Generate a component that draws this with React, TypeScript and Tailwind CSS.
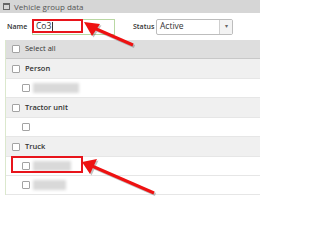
import React from "react";

type Row = {
  label?: string;
  parent: boolean;
  blur?: number;
};

const rows: Row[] = [
  { label: "Person", parent: true },
  { parent: false, blur: 46 },
  { label: "Tractor unit", parent: true },
  { parent: false },
  { label: "Truck", parent: true },
  { parent: false, blur: 38 },
  { parent: false, blur: 33 },
];

function Box() {
  return <span className="block w-[8px] h-[8px] shrink-0 border border-[#a3a3a3] bg-white rounded-[1px]" />;
}

export default function App() {
  return (
    <div
      className="relative w-[260px] h-[211px] overflow-hidden bg-white text-[#333]"
      style={{ fontFamily: "'Open Sans', 'Liberation Sans', sans-serif" }}
    >
      {/* title bar */}
      <div className="h-[13px] bg-[#d6d6d6] flex items-center pl-[3px] gap-[4px]">
        <span className="block w-[7px] h-[7px] border border-[#666] border-t-2" />
        <span className="text-[8px] leading-none text-[#555]">Vehicle group data</span>
      </div>

      {/* filter row */}
      <div className="h-[27px] flex items-center">
        <span className="ml-[7px] w-[25px] text-[7px] font-semibold leading-none">Name</span>
        <div className="w-[83px] h-[16px] border border-[#b9d8a3] bg-white flex items-center pl-[3px]">
          <span className="text-[8.5px] leading-none">Co3</span>
          <span className="block w-px h-[9px] bg-[#333] ml-px" />
        </div>
        <span className="ml-[18px] w-[23px] text-[7px] font-semibold leading-none">Status</span>
        <div className="w-[77px] h-[16px] border border-[#bdbdbd] rounded-[2px] bg-white flex items-center">
          <span className="flex-1 pl-[3px] text-[8.5px] leading-none">Active</span>
          <span className="w-[13px] h-full border-l border-[#cfcfcf] bg-[#f3f3f3] flex items-center justify-center text-[6px] text-[#666]">
            ▾
          </span>
        </div>
      </div>

      {/* list */}
      <div className="ml-[5px] border-l border-[#dbe8cd]">
        <div className="h-[19px] bg-[#dedede] border-b border-[#c8c8c8] flex items-center pl-[6px] gap-[5px]">
          <Box />
          <span className="text-[7.5px] leading-none">Select all</span>
        </div>
        {rows.map((r, i) =>
          r.parent ? (
            <div
              key={i}
              className="h-[20px] bg-[#f0f0f0] border-b border-[#e6e6e6] flex items-center pl-[6px] gap-[5px]"
            >
              <Box />
              <span className="text-[7.5px] font-semibold leading-none">{r.label}</span>
            </div>
          ) : (
            <div key={i} className="h-[19px] bg-white border-b border-[#e6e6e6] flex items-center pl-[16px] gap-[3px]">
              <Box />
              {r.blur && <span className="block h-[10px] bg-[#d9d9d9] blur-[1.5px]" style={{ width: r.blur }} />}
            </div>
          )
        )}
      </div>

      {/* annotations */}
      <div className="absolute left-[32px] top-[19px] w-[51px] h-[14px] border-2 border-[#e8141b]" />
      <div className="absolute left-[11px] top-[156px] w-[72px] h-[17px] border-2 border-[#e8141b]" />
      <svg className="absolute inset-0" width="260" height="211" viewBox="0 0 260 211">
        <g opacity="0.35" transform="translate(1.5 1.5)">
          <line x1="133" y1="45" x2="94" y2="28" stroke="#555" strokeWidth="3" />
          <polygon points="84,22 100,24 92,36" fill="#555" />
          <line x1="154" y1="193" x2="92" y2="166" stroke="#555" strokeWidth="3" />
          <polygon points="82,162 97,159 90,174" fill="#555" />
        </g>
        <line x1="133" y1="45" x2="94" y2="28" stroke="#ee1111" strokeWidth="3" />
        <polygon points="84,22 100,24 92,36" fill="#ee1111" />
        <line x1="154" y1="193" x2="92" y2="166" stroke="#ee1111" strokeWidth="3" />
        <polygon points="82,162 97,159 90,174" fill="#ee1111" />
      </svg>
    </div>
  );
}
